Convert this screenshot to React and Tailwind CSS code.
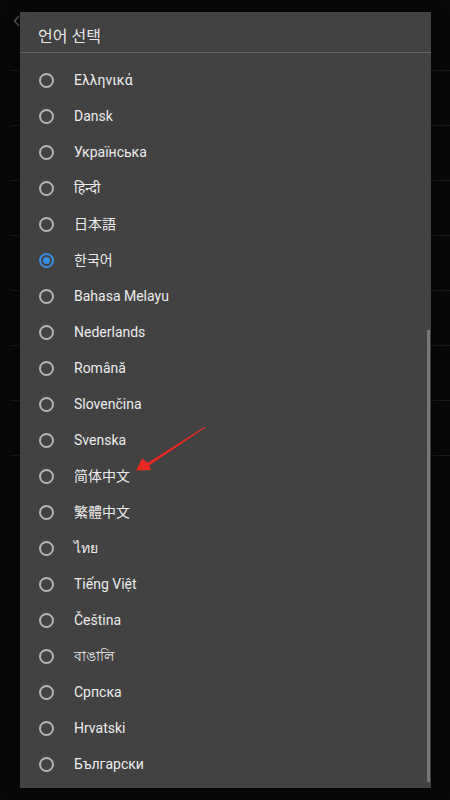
import React from 'react';

const LANGUAGES = [
  'Ελληνικά',
  'Dansk',
  'Українська',
  'हिन्दी',
  '日本語',
  '한국어',
  'Bahasa Melayu',
  'Nederlands',
  'Română',
  'Slovenčina',
  'Svenska',
  '简体中文',
  '繁體中文',
  'ไทย',
  'Tiếng Việt',
  'Čeština',
  'বাঙালি',
  'Српска',
  'Hrvatski',
  'Български',
];

const SELECTED = '한국어';

function Radio({ checked }) {
  return (
    <span
      className={`w-[15px] h-[15px] rounded-full border-2 flex items-center justify-center shrink-0 ${
        checked ? 'border-[#3a8ee6]' : 'border-[#b4b4b4]'
      }`}
    >
      {checked && <span className="w-[7px] h-[7px] rounded-full bg-[#3a8ee6]" />}
    </span>
  );
}

export default function App() {
  return (
    <div
      className="relative w-[450px] h-[800px] bg-[#080808] overflow-hidden"
      style={{ fontFamily: 'Roboto, "Noto Sans", "Noto Sans CJK KR", "Noto Sans CJK SC", sans-serif' }}
    >
      {/* page behind the dialog */}
      <div className="pt-[16px]">
        {Array.from({ length: 8 }).map((_, i) => (
          <div key={i} className="h-[55px] ml-[11px] border-b border-[#1b1b1b]" />
        ))}
      </div>
      <svg className="absolute left-[13px] top-[15px]" width="8" height="12" viewBox="0 0 8 12">
        <path d="M6 1 L1.5 6 L6 11" stroke="#5a5a5a" strokeWidth="1.6" fill="none" />
      </svg>

      {/* dialog */}
      <div className="absolute left-[20px] top-[12px] w-[411px] h-[776px] bg-[#424242] shadow-[0_4px_16px_rgba(0,0,0,0.6)] flex flex-col">
        <div className="h-[41px] pt-[15px] pl-[18px] text-[16px] leading-[20px] text-[#e6e6e6] border-b border-[#626262] shrink-0">
          언어 선택
        </div>
        <div className="pt-[9px]">
          {LANGUAGES.map((lang) => (
            <div key={lang} className="h-[36px] flex items-center pl-[19px]">
              <Radio checked={lang === SELECTED} />
              <span className="ml-[20px] text-[14px] leading-[20px] text-[#ececec]">{lang}</span>
            </div>
          ))}
        </div>
        <div className="absolute right-[1px] top-[318px] w-[3px] h-[452px] bg-[#777777]" />
      </div>

      {/* red annotation arrow */}
      <svg className="absolute left-0 top-0 pointer-events-none" width="450" height="800" viewBox="0 0 450 800">
        <polygon
          points="205,426.5 147.5,463 142,458.5 136,470.5 151.5,470 149,465.5 205.5,427.5"
          fill="#ea2a22"
        />
      </svg>
    </div>
  );
}
